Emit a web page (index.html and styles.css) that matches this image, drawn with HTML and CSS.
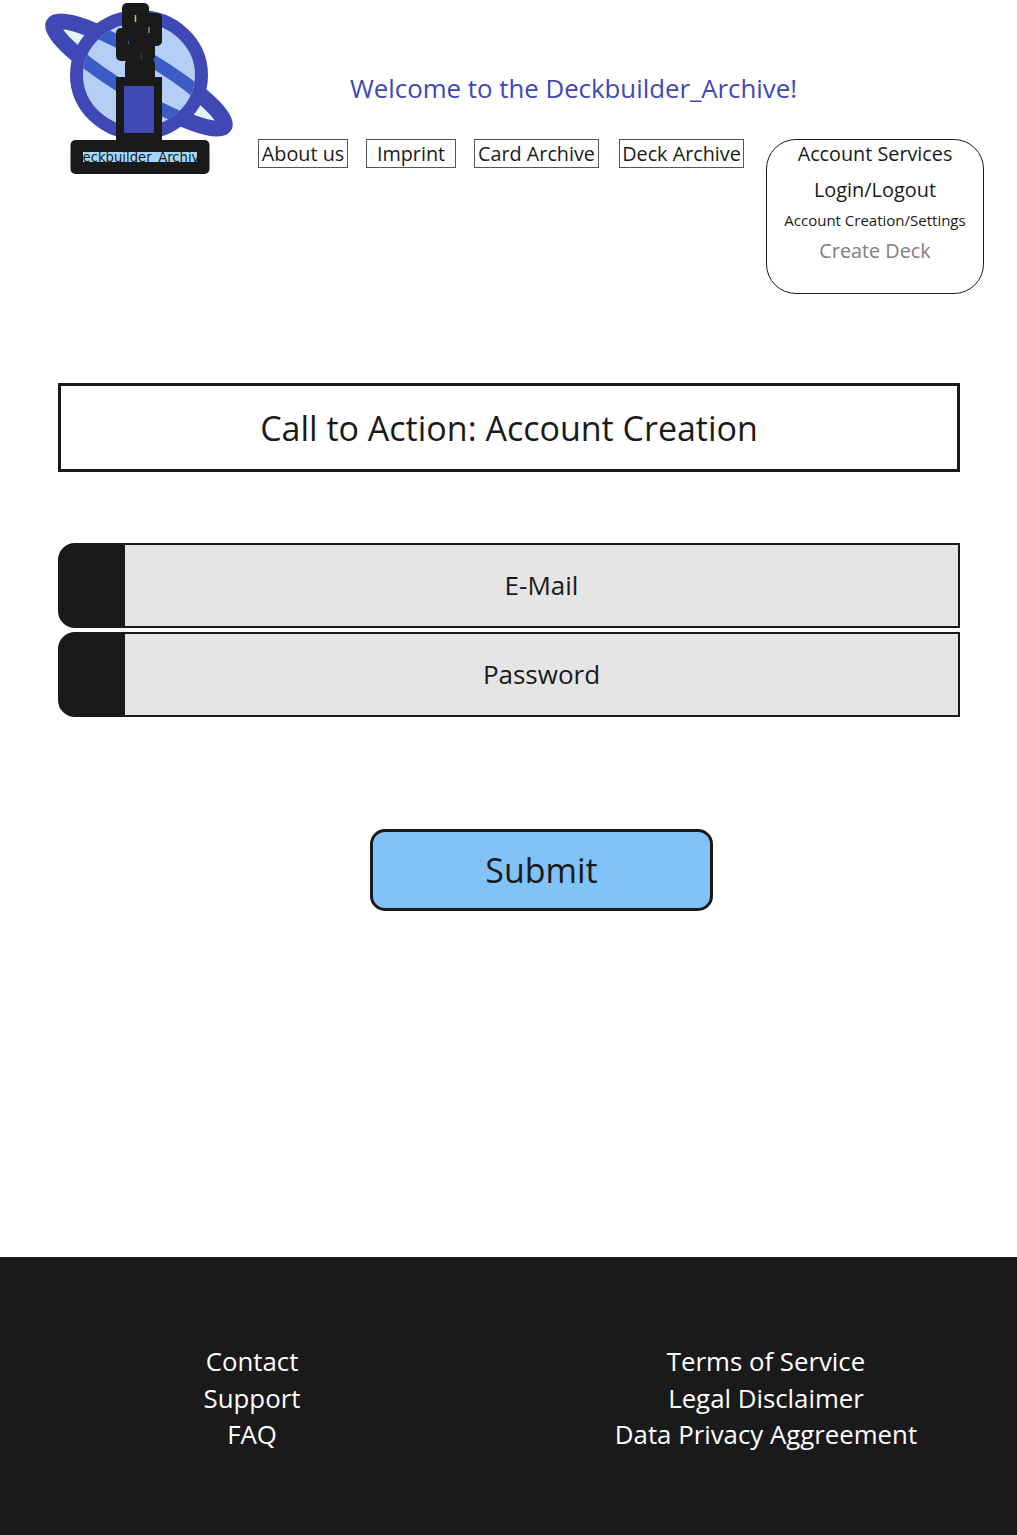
FILE: index.html
```html
<!DOCTYPE html>
<html lang="en">
<head>
  <meta charset="UTF-8">
  <title>Deckbuilder_Archive</title>
  <link rel="stylesheet" href="styles.css">
</head>
<body>
  <header class="top">
    <svg class="logo" viewBox="45 0 190 176" width="190" height="176" role="img" aria-label="Deckbuilder_Archive logo">
      <defs>
        <clipPath id="planetClip"><ellipse cx="139" cy="75" rx="56" ry="52"/></clipPath>
        <clipPath id="labelClip"><rect x="83" y="152" width="114" height="10"/></clipPath>
      </defs>
      <ellipse cx="139" cy="75" rx="99.500" ry="19" transform="rotate(31 139 75)" fill="#e3f2fd" stroke="#3f48b5" stroke-width="16"/>
      <ellipse cx="139" cy="75" rx="62.500" ry="58.500" fill="#b5cef5" stroke="#3f48b5" stroke-width="13"/>
      <g clip-path="url(#planetClip)">
        <ellipse cx="139" cy="75" rx="99.500" ry="19" transform="rotate(31 139 75)" fill="none" stroke="#3b5cc4" stroke-width="13"/>
      </g>
      <rect x="122" y="3" width="27" height="28" rx="5" fill="#1a1a1a"/>
      <rect x="140" y="13" width="22" height="33" rx="5" fill="#1a1a1a"/>
      <rect x="116" y="28" width="39" height="33" rx="5" fill="#1a1a1a"/>
      <rect x="125" y="58" width="30" height="24" rx="6" fill="#1a1a1a"/>
      <path d="M135.500 15v7" stroke="#d9c94a" stroke-width="1.500"/>
      <path d="M149 27v6" stroke="#a9bfe8" stroke-width="1"/>
      <path d="M128.500 41v3" stroke="#3b5cc4" stroke-width="1"/>
      <path d="M141.500 53v7" stroke="#5a2d3a" stroke-width="1.500"/>
      <rect x="116" y="77" width="46" height="64" fill="#1a1a1a"/>
      <rect x="124" y="86" width="30" height="47" fill="#3f48b5"/>
      <rect x="70.500" y="140" width="139" height="34" rx="5" fill="#1a1a1a"/>
      <rect x="83" y="152" width="114" height="10" fill="#a5d6f9"/>
      <text class="logo-label" x="140" y="161.500" text-anchor="middle" clip-path="url(#labelClip)">Deckbuilder_Archive</text>
    </svg>
    <div class="top-right">
      <h1 class="welcome">Welcome to the Deckbuilder_Archive!</h1>
      <div class="nav-row">
        <nav class="nav">
          <a class="nav-link nav-about" href="#">About us</a>
          <a class="nav-link nav-imprint" href="#">Imprint</a>
          <a class="nav-link nav-cards" href="#">Card Archive</a>
          <a class="nav-link nav-decks" href="#">Deck Archive</a>
        </nav>
        <div class="account">
          <a class="account-title" href="#">Account Services</a>
          <a class="account-login" href="#">Login/Logout</a>
          <a class="account-settings" href="#">Account Creation/Settings</a>
          <a class="account-deck" href="#">Create Deck</a>
        </div>
      </div>
    </div>
  </header>

  <main class="content">
    <h2 class="cta">Call to Action: Account Creation</h2>
    <form class="signup">
      <div class="fields">
        <div class="field"><span class="field-icon"></span><span class="field-label">E-Mail</span></div>
        <div class="field"><span class="field-icon"></span><span class="field-label">Password</span></div>
      </div>
      <button class="submit" type="button">Submit</button>
    </form>
  </main>

  <footer class="footer">
    <div class="footer-col footer-left">
      <a href="#">Contact</a>
      <a href="#">Support</a>
      <a href="#">FAQ</a>
    </div>
    <div class="footer-col footer-right">
      <a href="#">Terms of Service</a>
      <a href="#">Legal Disclaimer</a>
      <a href="#">Data Privacy Aggreement</a>
    </div>
  </footer>
</body>
</html>
```

FILE: styles.css
```css
* { box-sizing: border-box; }
body { margin: 0; height: 1535px; display: flex; flex-direction: column; font-family: "Open Sans", "Liberation Sans", sans-serif; color: #1a1a1a; background: #fff; overflow: hidden; }
a { color: inherit; text-decoration: none; }

.top { display: flex; height: 294px; padding-left: 45px; }
.logo { display: block; flex: none; }
.logo-label { font-family: "DejaVu Sans", sans-serif; font-size: 13.200px; fill: #1a1a1a; }
.top-right { margin-left: 23px; width: 726px; }
.welcome { margin: 0; height: 139px; padding: 70px 187px 0 0; font-size: 25.800px; line-height: 36px; font-weight: 400; text-align: right; color: #3f48b5; white-space: nowrap; }
.nav-row { display: flex; }
.nav { display: flex; align-items: flex-start; }
.nav-link { height: 29px; border: 1px solid #555; font-size: 19.800px; line-height: 28px; text-align: center; white-space: nowrap; }
.nav-about { width: 90px; }
.nav-imprint { width: 90px; margin-left: 18px; }
.nav-cards { width: 125px; margin-left: 18px; }
.nav-decks { width: 125px; margin-left: 20px; }
.account { width: 218px; height: 155px; margin-left: 22px; border: 1px solid #1a1a1a; border-radius: 30px; display: flex; flex-direction: column; align-items: center; }
.account-title { font-size: 19.800px; line-height: 28px; }
.account-login { margin-top: 7px; font-size: 19.900px; line-height: 29px; }
.account-settings { margin-top: 5px; font-size: 15px; line-height: 22px; }
.account-deck { margin-top: 6px; font-size: 19.800px; line-height: 28px; color: #808080; }

.content { flex: 1; padding: 89px 57px 0 58px; }
.cta { margin: 0; height: 89px; border: 3px solid #1a1a1a; font-size: 34px; line-height: 84px; font-weight: 400; text-align: center; }
.signup { display: flex; flex-direction: column; align-items: flex-start; }
.fields { width: 100%; margin-top: 71px; display: flex; flex-direction: column; gap: 4px; }
.field { display: flex; height: 85px; border: 2px solid #1a1a1a; border-radius: 17px 0 0 17px; background: #1a1a1a; }
.field-icon { flex: none; width: 65px; }
.field-label { flex: 1; background: #e5e5e5; font-size: 26px; line-height: 81px; text-align: center; }
.submit { width: 343px; height: 82px; margin-top: 112px; margin-left: 312px; border: 3px solid #1a1a1a; border-radius: 15px; background: #81c2f8; color: #1a1a1a; font-family: inherit; font-size: 34px; padding: 0; }

.footer { flex: none; height: 278px; background: #1a1a1a; color: #fff; padding-top: 86px; display: flex; }
.footer-col { flex: none; display: flex; flex-direction: column; align-items: center; font-size: 25.800px; line-height: 36.500px; white-space: nowrap; }
.footer-left { width: 504px; }
.footer-right { width: 524px; }
```
